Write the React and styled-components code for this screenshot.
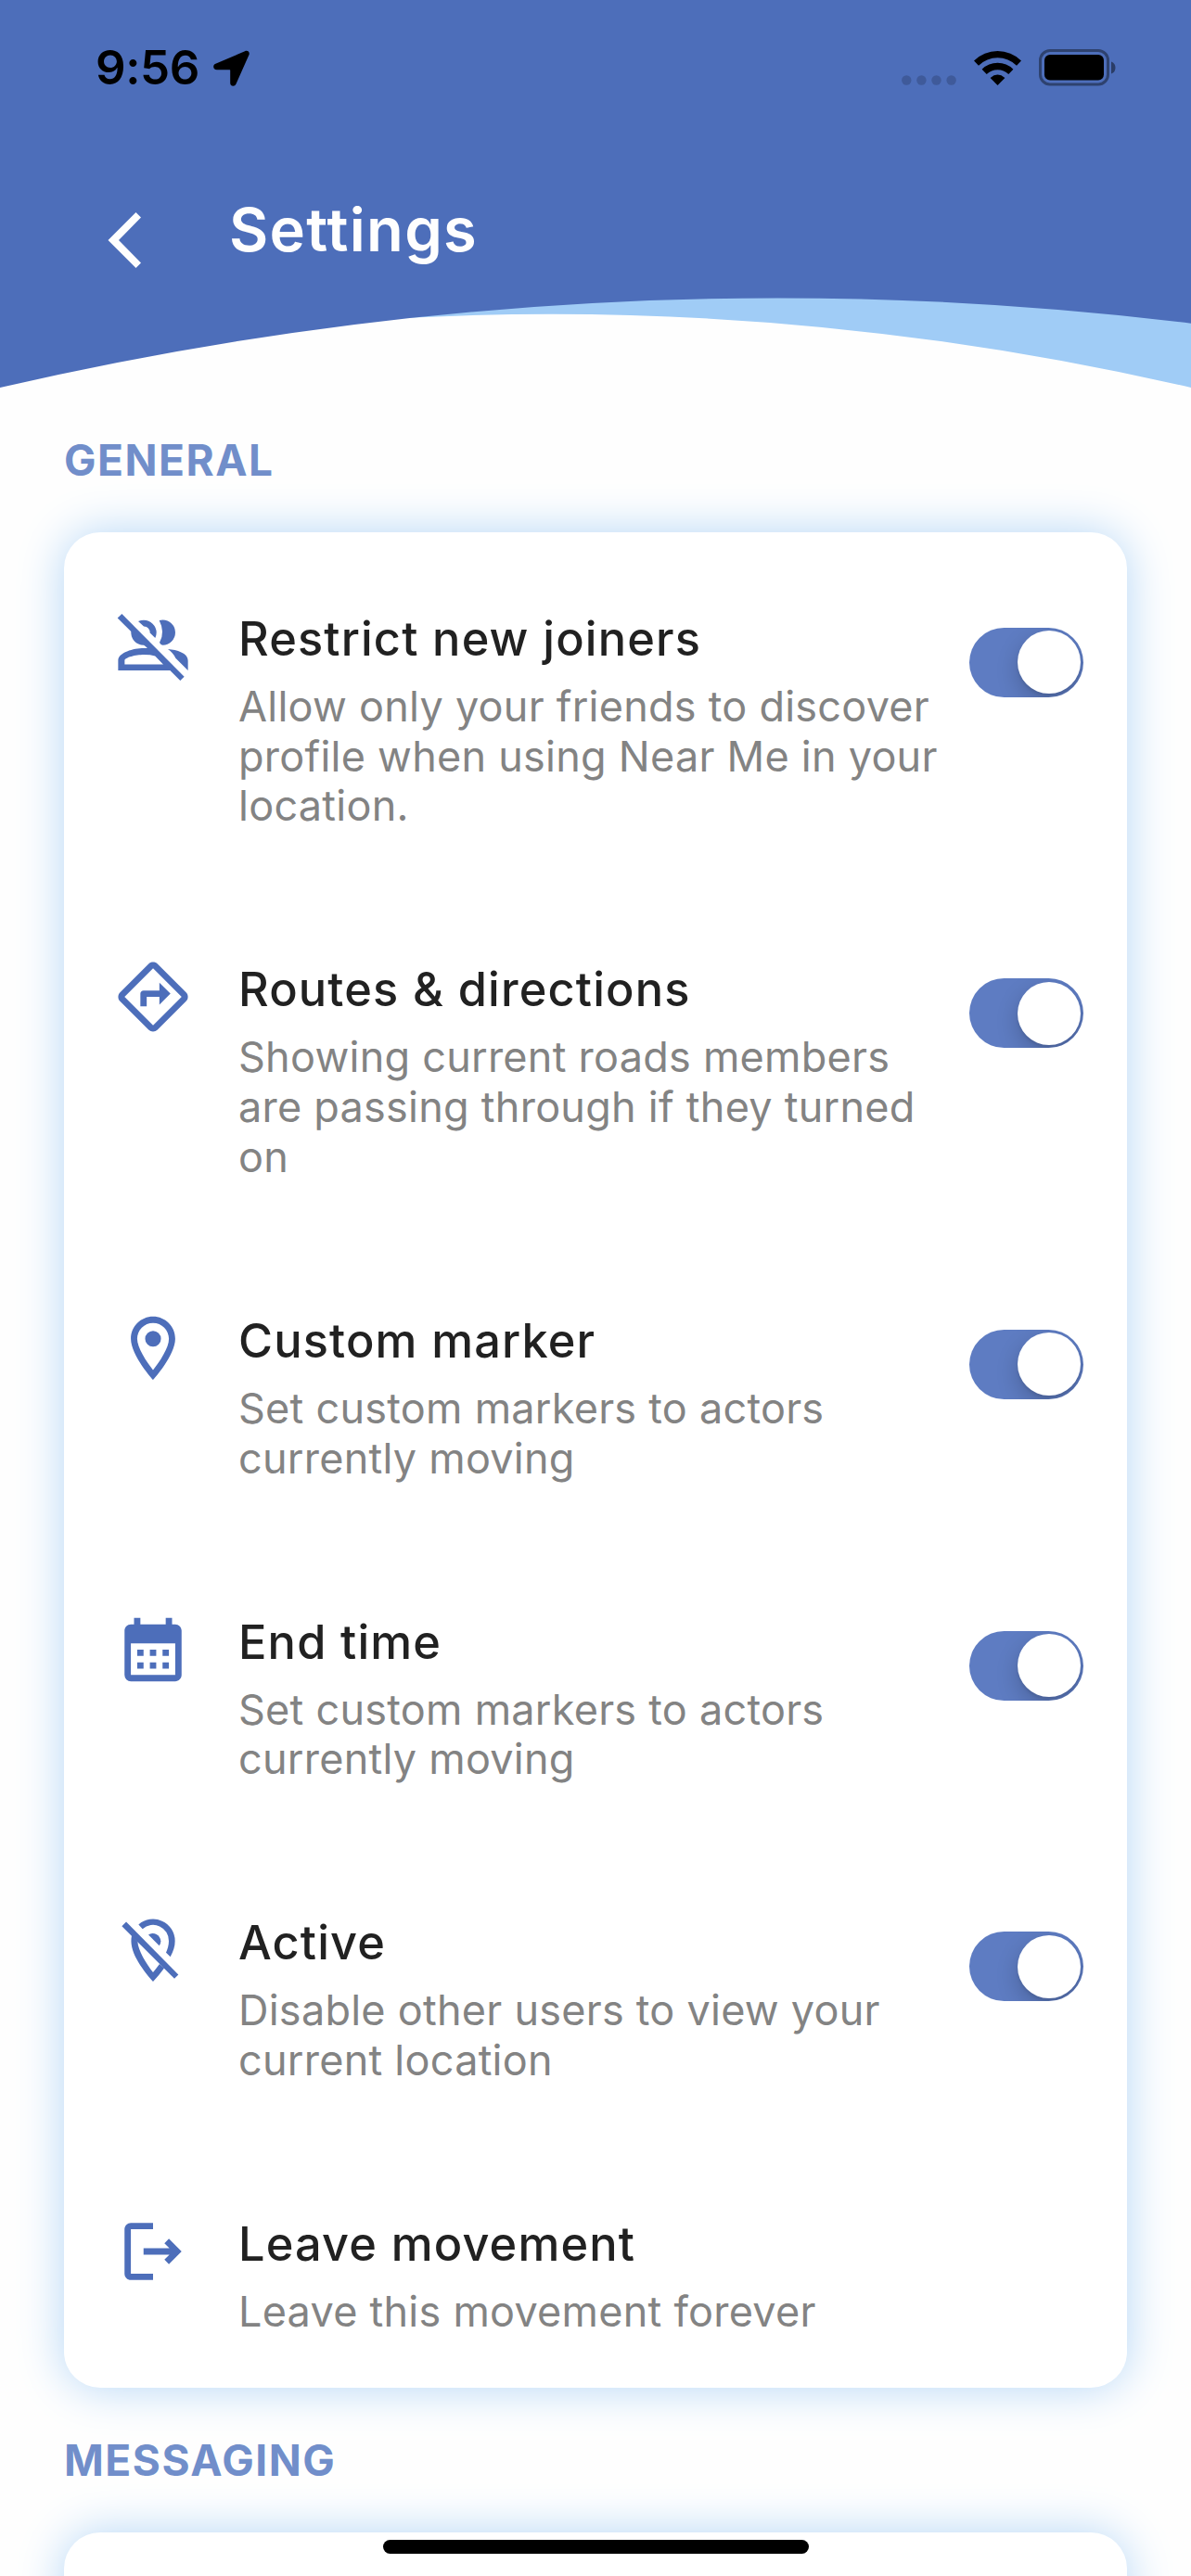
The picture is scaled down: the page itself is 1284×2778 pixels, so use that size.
import React from "react";
import styled, { createGlobalStyle } from "styled-components";

const GlobalStyle = createGlobalStyle`
  html, body { margin: 0; padding: 0; background: #fefefe; }
  *, *::before, *::after { box-sizing: border-box; }
`;

const Screen = styled.main`
  position: relative;
  display: flex;
  flex-direction: column;
  width: 1284px;
  height: 2778px;
  overflow: hidden;
  background: #fefefe;
  font-family: Inter, "Liberation Sans", sans-serif;
`;

const Header = styled.header`
  position: relative;
  flex: none;
  height: 418px;
`;

const Wave = styled.svg`
  position: absolute;
  inset: 0;
  width: 100%;
  height: 100%;
`;

const StatusBar = styled.div`
  position: relative;
  display: flex;
  justify-content: space-between;
  height: 146px;
  padding: 43px 81px 0 103px;
`;

const StatusGroup = styled.div`
  display: flex;
  align-items: center;
  height: 60px;
  gap: ${(p) => p.$gap}px;
`;

const Clock = styled.span`
  font-size: 51px;
  font-weight: 600;
  line-height: 60px;
  letter-spacing: -0.4px;
  color: #000;
`;

const Glyph = styled.svg`
  display: block;
  flex: none;
  width: ${(p) => p.$w}px;
  height: ${(p) => p.$h}px;
  margin-top: ${(p) => p.$top || 0}px;
`;

const TitleBar = styled.div`
  position: relative;
  display: flex;
  align-items: flex-start;
  padding: 62px 0 0 116px;
`;

const BackButton = styled.button`
  display: flex;
  width: 131px;
  padding: 21px 0 0;
  border: 0;
  background: none;
`;

const PageTitle = styled.h1`
  margin: 0;
  font-size: 65px;
  font-weight: 600;
  line-height: 80px;
  letter-spacing: 1.3px;
  color: #fefefe;
`;

const SectionLabel = styled.h2`
  flex: none;
  margin: 0;
  padding: 50px 69px 49.8px;
  font-size: 46px;
  font-weight: 700;
  line-height: 56px;
  letter-spacing: 1.5px;
  color: #718eca;
`;

const Card = styled.section`
  flex: none;
  display: flex;
  flex-direction: column;
  gap: 141.4px;
  margin: 0 69px;
  min-height: 400px;
  padding: 85px 47px 55.6px 55px;
  border-radius: 39px;
  background: #fff;
  box-shadow: 0 0 50px #b5d7f7;
`;

const Row = styled.div`
  display: flex;
  align-items: flex-start;
`;

const RowIcon = styled.svg`
  flex: none;
  width: 82px;
  height: 82px;
  margin: -3px 51px -20px 0;
  fill: #4d6eba;
`;

const RowText = styled.div`
  flex: 1;
  display: flex;
  flex-direction: column;
  gap: 16px;
`;

const RowTitle = styled.h3`
  margin: 0;
  font-size: 50.5px;
  font-weight: 500;
  line-height: 60px;
  letter-spacing: 1.15px;
  white-space: nowrap;
  color: #212121;
`;

const RowNote = styled.p`
  margin: 0;
  font-size: 45px;
  line-height: 53.7px;
  letter-spacing: 0.25px;
  white-space: pre-line;
  color: #838383;
`;

const Switch = styled.button`
  flex: none;
  display: flex;
  justify-content: flex-end;
  align-items: center;
  width: 123px;
  height: 75px;
  margin-top: 18px;
  padding: 0 3.5px;
  border: 0;
  border-radius: 38px;
  overflow: hidden;
  background: #5e7cc2;
`;

const Thumb = styled.span`
  width: 68px;
  height: 68px;
  border-radius: 50%;
  background: #fff;
  box-shadow: 0 9px 24px rgba(0, 0, 0, 0.2), 0 3px 3px rgba(0, 0, 0, 0.08);
`;

const HomeIndicator = styled.div`
  position: absolute;
  left: 413px;
  bottom: 24px;
  width: 459px;
  height: 15px;
  border-radius: 8px;
  background: #000;
`;

const icons = {
  groupOff: (
    <g transform="translate(-6.81 -4.74) scale(0.09747)">
      <path d="M78 80L92 67L294 270L281 283Z" />
      <path d="M145 91Q154 87 163 87A41 41 0 0 1 204 127Q204 137 200 145L183 128Q182 108 163 107Z" />
      <path d="M122 122A41 41 0 0 0 163 168Q169 170 175 178L185 185Z" />
      <path d="M213 88Q219 86 224 86A41 41 0 0 1 224 168Q218 168 214 160Q233 127 213 88Z" />
      <path fillRule="evenodd" d="M80 250V218C80 192 130 178 163 178H178L252 250ZM101 230H226L200 203Q185 199 163 199C138 199 101 208 101 218Z" />
      <path d="M241 181C270 183 306 194 306 218V250L266 210Q258 193 241 181Z" />
    </g>
  ),
  directions: (
    <path d="M22.43 10.59l-9.01-9.01c-.75-.75-2.07-.76-2.83 0l-9 9c-.78.78-.78 2.04 0 2.82l9 9c.39.39.9.58 1.41.58.51 0 1.02-.19 1.41-.58l8.99-8.99c.79-.76.8-2.02.03-2.82zm-10.42 10.4l-9-9 9-9 9 9-9 9zM8 11v4h2v-3h4v2.5l3.5-3.5L14 7.5V10H9c-.55 0-1 .45-1 1z" />
  ),
  place: (
    <>
      <path d="M12 2C8.13 2 5 5.13 5 9c0 5.25 7 13 7 13s7-7.75 7-13c0-3.87-3.13-7-7-7zM7 9c0-2.76 2.24-5 5-5s5 2.24 5 5c0 2.88-2.88 7.19-5 9.88C9.92 16.21 7 11.85 7 9z" />
      <circle cx="12" cy="9" r="2.5" />
    </>
  ),
  calendar: (
    <path d="M19 4h-1V2h-2v2H8V2H6v2H5c-1.11 0-1.99.9-1.99 2L3 20a2 2 0 0 0 2 2h14c1.1 0 2-.9 2-2V6c0-1.1-.9-2-2-2zm0 16H5V10h14v10zM9 14H7v-2h2v2zm4 0h-2v-2h2v2zm4 0h-2v-2h2v2zm-8 4H7v-2h2v2zm4 0h-2v-2h2v2zm4 0h-2v-2h2v2z" />
  ),
  placeOff: (
    <g transform="translate(-6.81 -3.36) scale(0.09747)">
      <path d="M92 80L106 66L275 237L262 250Z" />
      <path d="M146 75A71 71 0 0 1 264 128C264 145 259 161 249 179L235 166C240 154 244 141 244 128A51 51 0 0 0 159 89Z" />
      <path d="M178 108A26 26 0 0 1 218 128Q218 138 213 143Z" />
      <path d="M124 110C113 160 155 215 193 260Q213 238 229 216L214 203Q203 218 193 230C170 200 145 160 143 130Z" />
    </g>
  ),
  logout: (
    <path d="M17 8l-1.41 1.41L17.17 11H9v2h8.17l-1.58 1.58L17 16l4-4-4-4zM5 5h7V3H5c-1.1 0-2 .9-2 2v14c0 1.1.9 2 2 2h7v-2H5V5z" />
  ),
};

const settings = [
  {
    icon: "groupOff",
    title: "Restrict new joiners",
    note: "Allow only your friends to discover\nprofile when using Near Me in your\nlocation.",
    on: true,
  },
  {
    icon: "directions",
    title: "Routes & directions",
    note: "Showing current roads members\nare passing through if they turned\non",
    on: true,
  },
  {
    icon: "place",
    title: "Custom marker",
    note: "Set custom markers to actors\ncurrently moving",
    on: true,
  },
  {
    icon: "calendar",
    title: "End time",
    note: "Set custom markers to actors\ncurrently moving",
    on: true,
  },
  {
    icon: "placeOff",
    title: "Active",
    note: "Disable other users to view your\ncurrent location",
    on: true,
  },
  {
    icon: "logout",
    title: "Leave movement",
    note: "Leave this movement forever",
  },
];

export default function App() {
  return (
    <Screen>
      <GlobalStyle />
      <Header>
        <Wave viewBox="0 0 1284 418" preserveAspectRatio="none">
          <path d="M0 0H1284V418Q642 270.2 0 398Z" fill="#a0ccf6" />
          <path d="M0 0H1284V348.7Q642 270 0 418Z" fill="#4d6eba" />
        </Wave>
        <StatusBar>
          <StatusGroup $gap={15}>
            <Clock>9:56</Clock>
            <Glyph $w={39} $h={39} viewBox="0 0 39 39">
              <path
                d="M34 1.2C36.800-.2 39.600 2 38.500 5L24.500 36.500C23 40 18.200 39.200 18.200 35.500V21.800Q18.200 21.200 17.600 21.200H3.800C-.2 21.200-1.200 16.400 2.400 14.800Z"
                fill="#000"
              />
            </Glyph>
          </StatusGroup>
          <StatusGroup $gap={19}>
            <Glyph $w={59} $h={11} $top={26} viewBox="0 0 59 11">
              {[0, 1, 2, 3].map((i) => (
                <circle key={i} cx={5.3 + i * 16.1} cy="5.500" r="5.200" fill="#3f5a9a" />
              ))}
            </Glyph>
            <Glyph $w={51} $h={37} viewBox="0 0 51 37">
              <path d="M0 10.500A36.500 36.500 0 0 1 51 10.500L46 15.700A29.300 29.300 0 0 0 5 15.700Z" />
              <path d="M8.600 19.700A24.200 24.200 0 0 1 42.400 19.700L37.300 24.900A17 17 0 0 0 13.700 24.900Z" />
              <path d="M17.600 29Q25.500 22.200 33.400 29L25.500 37Z" />
            </Glyph>
            <Glyph $w={83} $h={40} viewBox="0 0 83 40">
              <rect x="1.500" y="1.500" width="73" height="36.500" rx="10.500" fill="none" stroke="#000" strokeOpacity=".4" strokeWidth="3" />
              <rect x="6" y="6" width="64" height="27.500" rx="6" />
              <path d="M78 13.500Q82.500 15 82.500 20T78 26.500Z" fillOpacity=".45" />
            </Glyph>
          </StatusGroup>
        </StatusBar>
        <TitleBar>
          <BackButton aria-label="Back">
            <Glyph $w={37} $h={60} viewBox="0 0 37 60">
              <path d="M.5 30L30.500 0L36 5.500L12 30L36 54.500L30.500 60Z" fill="#fefefe" />
            </Glyph>
          </BackButton>
          <PageTitle>Settings</PageTitle>
        </TitleBar>
      </Header>

      <SectionLabel>GENERAL</SectionLabel>
      <Card>
        {settings.map((item) => (
          <Row key={item.title}>
            <RowIcon viewBox="0 0 24 24">{icons[item.icon]}</RowIcon>
            <RowText>
              <RowTitle>{item.title}</RowTitle>
              <RowNote>{item.note}</RowNote>
            </RowText>
            {item.on && (
              <Switch role="switch" aria-checked="true" aria-label={item.title}>
                <Thumb />
              </Switch>
            )}
          </Row>
        ))}
      </Card>

      <SectionLabel>MESSAGING</SectionLabel>
      <Card />
      <HomeIndicator />
    </Screen>
  );
}
